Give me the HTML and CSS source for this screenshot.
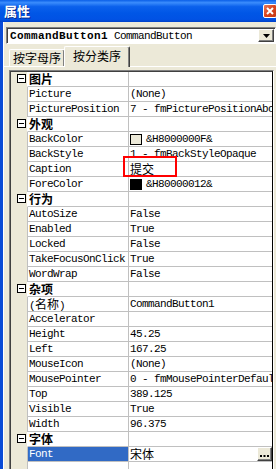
FILE: index.html
```html
<!DOCTYPE html>
<html lang="zh-CN">
<head>
    <meta charset="UTF-8">
    <meta name="viewport" content="width=device-width, initial-scale=1.0">
    <title>属性</title>
    <link rel="stylesheet" href="styles.css">
</head>
<body>
<div class="window">

    <!-- Title bar -->
    <div class="titlebar">
        <span class="title">属性</span>
        <span class="close">
            <svg width="8" height="8" viewBox="0 0 8 8"><path d="M1 1L7 7M7 1L1 7" stroke="#fff" stroke-width="2"/></svg>
        </span>
    </div>

    <div class="panel">
        <!-- Object selector -->
        <div class="combo">
            <div class="combo-text"><b>CommandButton1</b> CommandButton</div>
            <div class="combo-btn">
                <svg width="7" height="4" viewBox="0 0 7 4"><path d="M0 0H7L3.5 4Z" fill="#000"/></svg>
            </div>
        </div>

        <!-- Tabs -->
        <div class="tabs">
            <div class="tab">按字母序</div>
            <div class="tab active">按分类序</div>
        </div>

        <!-- Property grid -->
        <div class="grid">
            <div class="grid-inner">
                <div class="row cat"><div class="gutter"><span class="toggle"></span></div><div class="name">图片</div><div class="value"></div></div>
                <div class="row"><div class="gutter"></div><div class="name">Picture</div><div class="value">(None)</div></div>
                <div class="row"><div class="gutter"></div><div class="name">PicturePosition</div><div class="value">7 - fmPicturePositionAboveCenter</div></div>

                <div class="row cat"><div class="gutter"><span class="toggle"></span></div><div class="name">外观</div><div class="value"></div></div>
                <div class="row"><div class="gutter"></div><div class="name">BackColor</div><div class="value"><span class="swatch face"></span>&amp;H8000000F&amp;</div></div>
                <div class="row"><div class="gutter"></div><div class="name">BackStyle</div><div class="value">1 - fmBackStyleOpaque</div></div>
                <div class="row"><div class="gutter"></div><div class="name">Caption</div><div class="value open"><span class="cjk">提交</span></div></div>
                <div class="row"><div class="gutter"></div><div class="name">ForeColor</div><div class="value"><span class="swatch black"></span>&amp;H80000012&amp;</div></div>

                <div class="row cat"><div class="gutter"><span class="toggle"></span></div><div class="name">行为</div><div class="value"></div></div>
                <div class="row"><div class="gutter"></div><div class="name">AutoSize</div><div class="value">False</div></div>
                <div class="row"><div class="gutter"></div><div class="name">Enabled</div><div class="value">True</div></div>
                <div class="row"><div class="gutter"></div><div class="name">Locked</div><div class="value">False</div></div>
                <div class="row"><div class="gutter"></div><div class="name">TakeFocusOnClick</div><div class="value">True</div></div>
                <div class="row"><div class="gutter"></div><div class="name">WordWrap</div><div class="value">False</div></div>

                <div class="row cat"><div class="gutter"><span class="toggle"></span></div><div class="name">杂项</div><div class="value"></div></div>
                <div class="row"><div class="gutter"></div><div class="name open">(<span class="cjk">名称</span>)</div><div class="value">CommandButton1</div></div>
                <div class="row"><div class="gutter"></div><div class="name">Accelerator</div><div class="value"></div></div>
                <div class="row"><div class="gutter"></div><div class="name">Height</div><div class="value">45.25</div></div>
                <div class="row"><div class="gutter"></div><div class="name">Left</div><div class="value">167.25</div></div>
                <div class="row"><div class="gutter"></div><div class="name">MouseIcon</div><div class="value">(None)</div></div>
                <div class="row"><div class="gutter"></div><div class="name">MousePointer</div><div class="value">0 - fmMousePointerDefault</div></div>
                <div class="row"><div class="gutter"></div><div class="name">Top</div><div class="value">389.125</div></div>
                <div class="row"><div class="gutter"></div><div class="name">Visible</div><div class="value">True</div></div>
                <div class="row"><div class="gutter"></div><div class="name">Width</div><div class="value">96.375</div></div>

                <div class="row cat"><div class="gutter"><span class="toggle"></span></div><div class="name">字体</div><div class="value"></div></div>
                <div class="row selected"><div class="gutter"></div><div class="name">Font</div><div class="value open"><span class="cjk">宋体</span>
                    <span class="more"><svg width="9" height="2" viewBox="0 0 9 2"><rect x="0" width="2" height="2"/><rect x="3.5" width="2" height="2"/><rect x="7" width="2" height="2"/></svg></span>
                </div></div>

                <div class="row filler"><div class="gutter"></div><div class="name"></div><div class="value"></div></div>
            </div>
        </div>
    </div>

    <!-- red annotation box around the Caption value -->
    <div class="mark"></div>
</div>
</body>
</html>
```

FILE: styles.css
```css
* {
    box-sizing: border-box;
}
html, body {
    margin: 0;
    padding: 0;
}
body {
    width: 276px;
    height: 469px;
    overflow: hidden;
    background-color: #ECE9D8;
    font-family: "Liberation Mono", "Noto Sans CJK SC", monospace;
    font-size: 11px;
    letter-spacing: -0.6px;
    color: #000;
}
.window {
    position: relative;
    width: 276px;
    height: 469px;
    overflow: hidden;
    background-color: #ECE9D8;
}

/* title bar */
.titlebar {
    height: 22px;
    display: flex;
    align-items: center;
    justify-content: space-between;
    padding-left: 4px;
    background: linear-gradient(to bottom, #0A5FE8 0%, #3A8CFC 12%, #0B61EC 30%, #0056E6 60%, #0152E4 88%, #0041C8 100%);
}
.title {
    color: #fff;
    font-family: "Noto Sans CJK SC", sans-serif;
    font-weight: bold;
    font-size: 13px;
    letter-spacing: 0;
    line-height: 16px;
    text-shadow: 1px 1px #0A2A8C;
}
.close {
    width: 14px;
    height: 14px;
    margin-right: -1px;
    display: flex;
    align-items: center;
    justify-content: center;
    border: 1px solid #fff;
    border-radius: 2px;
    background: linear-gradient(to bottom right, #E87A5C, #D9441E 50%, #C23A16);
}

/* panel */
.panel {
    height: 447px;
    border-left: 3px solid #0A4BD6;
    box-shadow: inset 1px 0 #fff;
    padding-top: 5px;
}

.combo {
    margin-left: 3px;
    width: 270px;
    height: 17px;
    display: flex;
    background-color: #fff;
    border-top: 1px solid #808080;
    border-left: 1px solid #808080;
    border-right: 1px solid #fff;
    border-bottom: 1px solid #fff;
    box-shadow: inset 1px 1px #404040;
    padding: 1px 1px 0 1px;
}
.combo-text {
    flex: 1;
    padding-left: 2px;
    line-height: 14px;
    white-space: nowrap;
    overflow: hidden;
}
.combo-text b {
    letter-spacing: 0.4px;
}
.combo-btn {
    width: 16px;
    height: 13px;
    display: flex;
    align-items: center;
    justify-content: center;
    background-color: #ECE9D8;
    border: 1px solid;
    border-color: #fff #404040 #404040 #fff;
    box-shadow: inset -1px -1px #808080;
}

/* tabs */
.tabs {
    margin-top: 2px;
    height: 21px;
    display: flex;
    align-items: flex-end;
    border-bottom: 1px solid #fff;
    padding-left: 6px;
}
.tab {
    height: 17px;
    width: 56px;
    font-family: "Noto Sans CJK SC", sans-serif;
    font-size: 12px;
    letter-spacing: 0;
    line-height: 16px;
    text-align: center;
    border: 1px solid;
    border-bottom: none;
    border-color: #fff #404040 #fff #fff;
    border-radius: 2px 2px 0 0;
    box-shadow: inset -1px 0 #808080;
}
.tab.active {
    width: 66px;
    height: 21px;
    margin-left: -1px;
    margin-bottom: -1px;
    padding-top: 1px;
    background-color: #ECE9D8;
}

/* grid */
.grid {
    margin-top: 3px;
    margin-left: 6px;
    width: 265px;
    height: 400px;
    border-top: 1px solid #808080;
    border-left: 1px solid #808080;
    border-right: 1px solid #fff;
}
.grid-inner {
    height: 100%;
    display: flex;
    flex-direction: column;
    border-top: 1px solid #404040;
    border-left: 1px solid #404040;
    border-right: 1px solid #000;
}
.row {
    display: flex;
    height: 15px;
    flex-shrink: 0;
}
.gutter {
    width: 16px;
    position: relative;
    background-color: #ECE9D8;
}
.name, .value {
    border-bottom: 1px solid #C0C0C0;
    background-color: #fff;
    line-height: 14px;
    white-space: nowrap;
    overflow: hidden;
}
.name {
    width: 101px;
    border-left: 1px solid #C0C0C0;
    padding-left: 1px;
}
.value {
    flex: 1;
    display: flex;
    align-items: center;
    border-left: 1px solid #C0C0C0;
    padding-left: 1px;
}
.name.open, .value.open {
    overflow: visible;
}
.cjk {
    font-family: "Noto Sans CJK SC", sans-serif;
    font-size: 12px;
    letter-spacing: 0;
    line-height: 14px;
}
.cat .name {
    overflow: visible;
    border-left-color: #fff;
    font-family: "Noto Sans CJK SC", sans-serif;
    font-weight: bold;
    font-size: 12px;
    letter-spacing: 0;
}
.toggle {
    position: absolute;
    left: 6px;
    top: 2px;
    width: 9px;
    height: 9px;
    border: 1px solid #000;
    background-color: #fff;
}
.toggle::after {
    content: "";
    position: absolute;
    left: 1px;
    top: 3px;
    width: 5px;
    height: 1px;
    background-color: #000;
}
.swatch {
    width: 12px;
    height: 11px;
    border: 1px solid #000;
    margin-right: 4px;
    flex-shrink: 0;
}
.swatch.face {
    background-color: #ECE9D8;
}
.swatch.black {
    background-color: #000;
}
.selected .name {
    background-color: #316AC5;
    color: #fff;
}
.more {
    margin-left: auto;
    width: 15px;
    height: 14px;
    display: flex;
    align-items: flex-end;
    justify-content: center;
    padding-bottom: 3px;
    background-color: #ECE9D8;
    border: 1px solid;
    border-color: #fff #404040 #404040 #fff;
    box-shadow: inset -1px -1px #808080;
}
.filler {
    flex: 1;
}
.filler .name, .filler .value {
    border-bottom: none;
}

/* annotation */
.mark {
    position: absolute;
    left: 123px;
    top: 156px;
    width: 54px;
    height: 21px;
    border: 2px solid #f00;
}
```
